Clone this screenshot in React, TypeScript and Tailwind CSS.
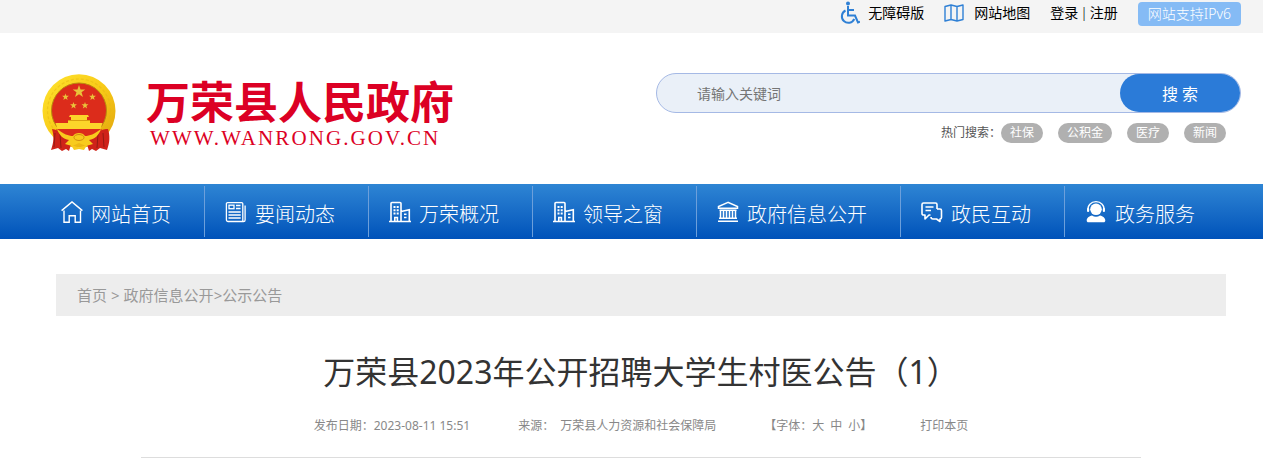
import type { ReactNode } from 'react';

const HomeIcon = () => (
  <svg viewBox="0 0 22 22" className="h-[22px] w-[22px] shrink-0" fill="none" stroke="currentColor" strokeWidth="1.4">
    <path d="M.6 9.6 11 .9l10.400 8.700" />
    <path d="M3 9.500v11.700h5.200v-6.400h6v6.400h5.300V9.500" />
  </svg>
);

const NewsIcon = () => (
  <svg viewBox="0 0 22 22" className="h-[22px] w-[22px] shrink-0" fill="none" stroke="currentColor" strokeWidth="1.3">
    <path d="M3 20.500h15.500a1.600 1.600 0 0 0 1.600-1.600V4.500" />
    <path d="M17.800 20V2.800A1.200 1.200 0 0 0 16.600 1.600H2.600A1.200 1.200 0 0 0 1.400 2.800v16a1.700 1.700 0 0 0 1.700 1.700" />
    <rect x="4" y="4.200" width="5" height="3.500" />
    <path d="M11 4.500h4.500M11 7.500h4.500M3.500 11h12.200M3.500 14h12.200M3.500 17h12.200" />
  </svg>
);

const BuildingIcon = () => (
  <svg viewBox="0 0 22 22" className="h-[22px] w-[22px] shrink-0" fill="none" stroke="currentColor" strokeWidth="1.6">
    <path d="M0 20.500h22M2 20.500V2.500a1 1 0 0 1 1-1h8a1 1 0 0 1 1 1v18M12 10.500l8.300-1.800v11.800" />
    <path d="M5.800 20.500v-4h2.600v4M15 13.300h2.500M15 16.500h2.500" />
    <path d="M5.500 5v8.500M8.700 5v8.500" strokeWidth="2" strokeDasharray="2 1.200" />
  </svg>
);

const HallIcon = () => (
  <svg viewBox="0 0 22 22" className="h-[22px] w-[22px] shrink-0" fill="none" stroke="currentColor" strokeWidth="1.5">
    <path d="M11 1.400 1.500 5.500v1.700h19V5.500z" />
    <path d="M3.500 9.500v7.500M6.500 9.500v7.500M9.500 9.500v7.500M12.500 9.500v7.500M15.500 9.500v7.500M18.500 9.500v7.500" />
    <path d="M2.500 9.300h17M2 17.300h18M1 20.300h20" />
  </svg>
);

const ChatIcon = () => (
  <svg viewBox="0 0 22 22" className="h-[22px] w-[22px] shrink-0" fill="none" stroke="currentColor" strokeWidth="1.6" strokeLinejoin="round">
    <path d="M16 8V3.500a1.500 1.500 0 0 0-1.500-1.500h-12A1.500 1.500 0 0 0 1 3.500v9A1.500 1.500 0 0 0 2.500 14H4v4l4-4h1.500" />
    <path d="M16 8h3a1.500 1.500 0 0 1 1.500 1.500v7A1.500 1.500 0 0 1 19 18v2.500L15.500 18H12a2 2 0 0 1-2-2" />
    <path d="M4.500 6h8M4.500 9.500h5.500" />
  </svg>
);

const ServiceIcon = () => (
  <svg viewBox="0 0 22 22" className="h-[22px] w-[22px] shrink-0" fill="currentColor">
    <circle cx="11" cy="8.300" r="5.800" />
    <path d="M3 9.500C2.300 4.500 6 .7 11 .7s8.700 3.800 8 8.800" fill="none" stroke="currentColor" strokeWidth="1.300" />
    <rect x="2" y="7" width="2.200" height="4" rx="1" />
    <rect x="17.800" y="7" width="2.200" height="4" rx="1" />
    <path d="M7 14.500c2.500 1.700 5.500 1.700 8 0 3 .5 5.300 2.500 5.300 5 0 1-.6 1.800-1.800 1.800h-15c-1.200 0-1.800-.8-1.800-1.800 0-2.500 2.300-4.500 5.300-5z" />
  </svg>
);

const WheelchairIcon = () => (
  <svg viewBox="0 0 20 24" className="h-6 w-5" fill="none" stroke="#2f80d5" strokeWidth="2">
    <circle cx="8" cy="2.500" r="2" fill="#2f80d5" stroke="none" />
    <path d="M8 5v9.500h7l3 7 2-.8M8 9h6" />
    <path d="M5.500 9.500a6.500 6.500 0 1 0 8.800 8.500" />
  </svg>
);

const MapIcon = () => (
  <svg viewBox="0 0 20 18" className="h-[18px] w-5" fill="none" stroke="#2f80d5" strokeWidth="1.4" strokeLinejoin="round">
    <path d="M1 2.500 7 1l6 1.500L19 1v14.500L13 17l-6-1.500L1 17zM7 1v14.500M13 2.500V17" />
  </svg>
);

const STAR = 'M0-6 1.400-1.900h4.300L2.300.7l1.300 4.200L0 2.400l-3.600 2.500L-2.300.7l-3.400-2.600h4.300z';

const Emblem = () => (
  <svg viewBox="0 0 74 78" className="h-[78px] w-[74px]" role="img" aria-label="国徽">
    <defs>
      <linearGradient id="gold" x1="0" y1="0" x2="1" y2="1">
        <stop offset="0" stopColor="#ffe52e" />
        <stop offset=".5" stopColor="#f8ca18" />
        <stop offset="1" stopColor="#dfa20c" />
      </linearGradient>
    </defs>
    <ellipse cx="37" cy="37" rx="36.500" ry="36.800" fill="url(#gold)" />
    <circle cx="37" cy="36.500" r="31.500" fill="none" stroke="#e5b512" strokeWidth="1.200" strokeDasharray="3 2" opacity=".5" />
    <circle cx="37" cy="36.500" r="27.500" fill="#dc2c1b" stroke="#b98b0d" />
    <g fill="#e9c23a">
      <path d={STAR} transform="translate(37 17.500) scale(1.100)" />
      <path d={STAR} transform="translate(23.500 23) scale(.6)" />
      <path d={STAR} transform="translate(50.500 23) scale(.6)" />
      <path d={STAR} transform="translate(31.500 31.500) scale(.6)" />
      <path d={STAR} transform="translate(43 31.500) scale(.6)" />
    </g>
    <path d="M28 41h18l1 2h-2v3h3v3h12.500l-2 6h-43l-2-6H26v-3h3v-3h-2z" fill="#fcd52a" />
    <path d="M26 46.500h22" stroke="#d9a010" />
    <path d="M14 55h46c-3 4-6 6-9 8H23c-3-2-6-4-9-8z" fill="#dc2c1b" />
    <path d="M10 55c7 1 12 5 17 9l3 3-3 10-3-2-4 2-4-3-7 2c3-8 3-14 1-21zM64 55c-7 1-12 5-17 9l-3 3 3 10 3-2 4 2 4-3 7 2c3-8 3-14 1-21z" fill="#cf2219" />
    <path d="M13 59l-1 14M18 60l1 14M61 59l1 14M56 60l-1 14" stroke="#941a13" strokeWidth="1" />
    <path d="M15 55c7 5 11 7 16 7 2-4 10-4 12 0 5 0 9-2 16-7-2 6-6 10-12 11l4 4-7 2-7-3-7 3-7-2 4-4c-6-1-10-5-12-11z" fill="#f8cb1d" />
    <ellipse cx="37" cy="63.500" rx="5" ry="3" fill="none" stroke="#d08d10" />
    <path d="m29 71 8 2.500 8-2.500-3 5-5-1-5 1z" fill="#f8cb1d" />
  </svg>
);

interface NavItem {
  name: string;
  icon: ReactNode;
}

const navItems: NavItem[] = [
  { name: '网站首页', icon: <HomeIcon /> },
  { name: '要闻动态', icon: <NewsIcon /> },
  { name: '万荣概况', icon: <BuildingIcon /> },
  { name: '领导之窗', icon: <BuildingIcon /> },
  { name: '政府信息公开', icon: <HallIcon /> },
  { name: '政民互动', icon: <ChatIcon /> },
  { name: '政务服务', icon: <ServiceIcon /> },
];

const hotWords = ['社保', '公积金', '医疗', '新闻'];

const TopBar = () => (
  <div className="flex h-[33px] items-start justify-end bg-[#f4f4f4] pr-[22px] text-sm text-black">
    <a href="#" className="flex h-[26px] items-center gap-2">
      <WheelchairIcon />
      无障碍版
    </a>
    <a href="#" className="ml-5 flex h-[26px] items-center gap-2.5">
      <MapIcon />
      网站地图
    </a>
    <div className="ml-5 flex h-[26px] items-center gap-0.5">
      <a href="#">登录</a>
      <span className="font-light">|</span>
      <a href="#">注册</a>
    </div>
    <a href="#" className="mt-0.5 ml-5 flex h-6 items-center rounded-sm bg-[#85bbf5] px-2.5 font-light text-white">
      网站支持IPv6
    </a>
  </div>
);

const Header = () => (
  <header className="flex h-[151px] items-start justify-between pr-[22px] pl-[42px]">
    <a href="#" className="flex items-start gap-[30px] pt-[41px] text-[#dc0024]">
      <Emblem />
      <span className="flex flex-col">
        <span className="text-[44px] leading-[56px] font-bold">万荣县人民政府</span>
        <span className="pl-1 font-['Liberation_Serif',serif] text-[21px] leading-4 tracking-widest">
          WWW.WANRONG.GOV.CN
        </span>
      </span>
    </a>
    <div className="w-[585px] pt-10">
      <form className="flex h-10 rounded-full border border-[#a5b9e5] bg-[#eaf0f8]">
        <input
          type="text"
          aria-label="请输入关键词"
          placeholder="请输入关键词"
          className="min-w-0 flex-1 bg-transparent pt-0.5 pl-10 text-sm outline-none placeholder:text-[#757575]"
        />
        <button type="button" className="w-[120px] rounded-full bg-[#2b7bd8] pt-0.5 text-base text-white">
          搜 索
        </button>
      </form>
      <div className="mt-2.5 flex items-center justify-end pr-[15px] text-xs text-[#555]">
        <span>热门搜索：</span>
        <div className="flex gap-[15px]">
          {hotWords.map((word) => (
            <a key={word} href="#" className="h-5 rounded-full bg-[#b0b0b0] px-[9px] leading-5 text-white">
              {word}
            </a>
          ))}
        </div>
      </div>
    </div>
  </header>
);

const Nav = () => (
  <nav className="flex h-[55px] items-center bg-linear-to-b from-[#2e85d4] to-[#0052b9] pl-[41px]">
    {navItems.map((item) => (
      <a
        key={item.name}
        href="#"
        className="flex h-[51px] items-center gap-2 border-r border-[#6c9fdb] pr-[33px] pl-5 text-xl font-light whitespace-nowrap text-white last:border-r-0"
      >
        {item.icon}
        <span className="pt-1.5">{item.name}</span>
      </a>
    ))}
  </nav>
);

const Article = () => (
  <main className="pr-[37px] pl-14">
    <div className="mt-[35px] flex h-[42px] items-center bg-[#ededed] px-[21px] text-[15px] text-[#999]">
      <a href="#">首页</a>
      <span className="px-1">&gt;</span>
      <a href="#">政府信息公开</a>
      <span>&gt;</span>
      <a href="#">公示公告</a>
    </div>
    <h1 className="mt-8 text-center text-[32px] leading-[48px] text-[#333]">
      万荣县2023年公开招聘大学生村医公告（1）
    </h1>
    <div className="mx-auto mt-5 max-w-[1000px] border-b border-[#ddd] pb-[21px]">
      <div className="flex justify-center gap-12 text-xs leading-5 text-[#888]">
        <span>发布日期：2023-08-11 15:51</span>
        <span className="flex gap-1.5">
          <span>来源：</span>
          <span>万荣县人力资源和社会保障局</span>
        </span>
        <span className="flex">
          【字体：
          <button type="button">大</button>
          <button type="button" className="mx-1.5">中</button>
          <button type="button">小</button>】
        </span>
        <a href="#">打印本页</a>
      </div>
    </div>
  </main>
);

export default function App() {
  return (
    <div className="min-h-screen overflow-hidden bg-white font-['Noto_Sans','Noto_Sans_CJK_SC',sans-serif]" lang="zh-CN">
      <TopBar />
      <Header />
      <Nav />
      <Article />
    </div>
  );
}
